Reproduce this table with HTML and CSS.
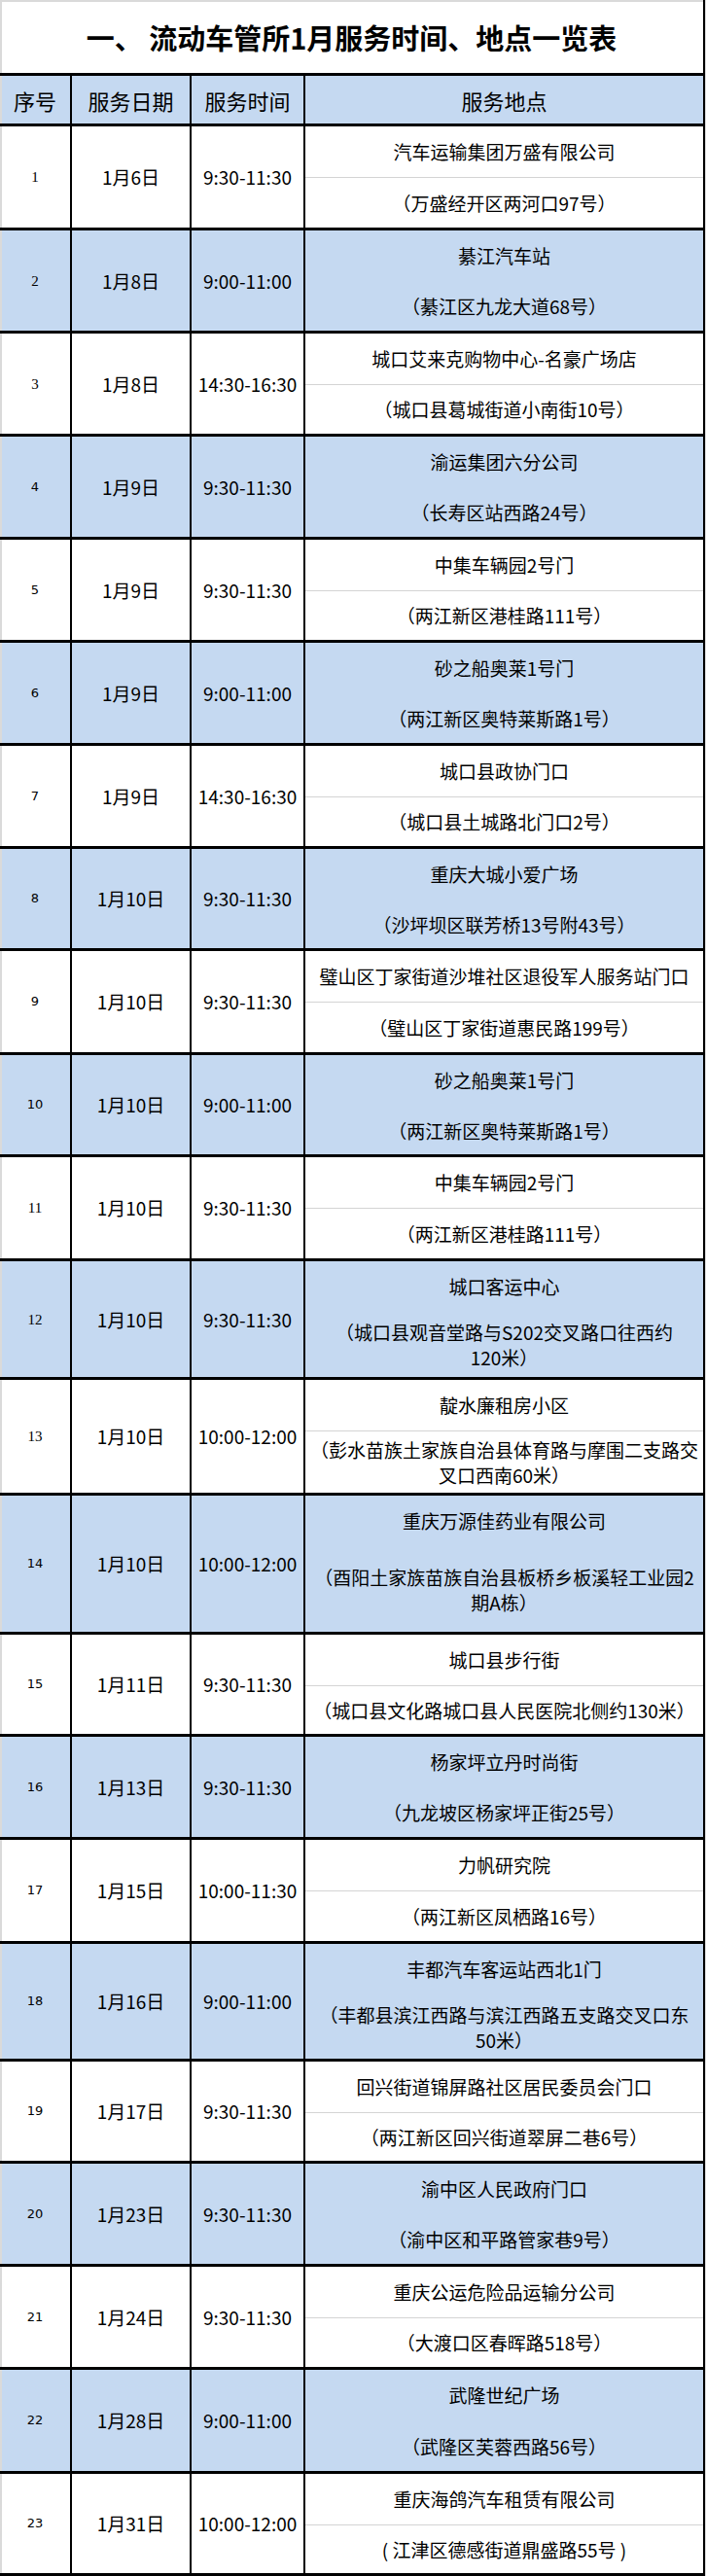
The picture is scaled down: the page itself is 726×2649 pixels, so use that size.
FILE: index.html
```html
<!DOCTYPE html>
<html lang="zh-CN">
<head>
<meta charset="utf-8">
<title>流动车管所1月服务时间、地点一览表</title>
<link rel="stylesheet" href="styles.css">
</head>
<body>
<div class="sheet">
  <div class="title-row">一、 流动车管所1月服务时间、地点一览表</div>

  <div class="row head">
    <div class="cell c-seq">序号</div>
    <div class="cell">服务日期</div>
    <div class="cell">服务时间</div>
    <div class="cell">服务地点</div>
  </div>

  <div class="row h104">
    <div class="cell c-seq serif">1</div>
    <div class="cell">1月6日</div>
    <div class="cell">9:30-11:30</div>
    <div class="loc"><div class="name">汽车运输集团万盛有限公司</div><div class="addr">（万盛经开区两河口97号）</div></div>
  </div>
  <div class="row blue h103">
    <div class="cell c-seq serif">2</div>
    <div class="cell">1月8日</div>
    <div class="cell">9:00-11:00</div>
    <div class="loc"><div class="name">綦江汽车站</div><div class="addr">（綦江区九龙大道68号）</div></div>
  </div>
  <div class="row h103">
    <div class="cell c-seq serif">3</div>
    <div class="cell">1月8日</div>
    <div class="cell">14:30-16:30</div>
    <div class="loc"><div class="name">城口艾来克购物中心-名豪广场店</div><div class="addr">（城口县葛城街道小南街10号）</div></div>
  </div>
  <div class="row blue h103">
    <div class="cell c-seq sans">4</div>
    <div class="cell">1月9日</div>
    <div class="cell">9:30-11:30</div>
    <div class="loc"><div class="name">渝运集团六分公司</div><div class="addr">（长寿区站西路24号）</div></div>
  </div>
  <div class="row h103">
    <div class="cell c-seq sans">5</div>
    <div class="cell">1月9日</div>
    <div class="cell">9:30-11:30</div>
    <div class="loc"><div class="name">中集车辆园2号门</div><div class="addr">（两江新区港桂路111号）</div></div>
  </div>
  <div class="row blue h103">
    <div class="cell c-seq sans">6</div>
    <div class="cell">1月9日</div>
    <div class="cell">9:00-11:00</div>
    <div class="loc"><div class="name">砂之船奥莱1号门</div><div class="addr">（两江新区奥特莱斯路1号）</div></div>
  </div>
  <div class="row h103">
    <div class="cell c-seq sans">7</div>
    <div class="cell">1月9日</div>
    <div class="cell">14:30-16:30</div>
    <div class="loc"><div class="name">城口县政协门口</div><div class="addr">（城口县土城路北门口2号）</div></div>
  </div>
  <div class="row blue h102">
    <div class="cell c-seq sans">8</div>
    <div class="cell">1月10日</div>
    <div class="cell">9:30-11:30</div>
    <div class="loc"><div class="name">重庆大城小爱广场</div><div class="addr">（沙坪坝区联芳桥13号附43号）</div></div>
  </div>
  <div class="row h104">
    <div class="cell c-seq sans">9</div>
    <div class="cell">1月10日</div>
    <div class="cell">9:30-11:30</div>
    <div class="loc"><div class="name">璧山区丁家街道沙堆社区退役军人服务站门口</div><div class="addr">（璧山区丁家街道惠民路199号）</div></div>
  </div>
  <div class="row blue h102">
    <div class="cell c-seq sans">10</div>
    <div class="cell">1月10日</div>
    <div class="cell">9:00-11:00</div>
    <div class="loc"><div class="name">砂之船奥莱1号门</div><div class="addr">（两江新区奥特莱斯路1号）</div></div>
  </div>
  <div class="row h104">
    <div class="cell c-seq serif">11</div>
    <div class="cell">1月10日</div>
    <div class="cell">9:30-11:30</div>
    <div class="loc"><div class="name">中集车辆园2号门</div><div class="addr">（两江新区港桂路111号）</div></div>
  </div>
  <div class="row blue h119">
    <div class="cell c-seq serif">12</div>
    <div class="cell">1月10日</div>
    <div class="cell">9:30-11:30</div>
    <div class="loc"><div class="name">城口客运中心</div><div class="addr"><span>（城口县观音堂路与S202交叉路口往西约<span class="nb">120米）</span></span></div></div>
  </div>
  <div class="row h116">
    <div class="cell c-seq serif">13</div>
    <div class="cell">1月10日</div>
    <div class="cell">10:00-12:00</div>
    <div class="loc"><div class="name">靛水廉租房小区</div><div class="addr">（彭水苗族土家族自治县体育路与摩围二支路交叉口西南60米）</div></div>
  </div>
  <div class="row blue h140">
    <div class="cell c-seq sans">14</div>
    <div class="cell">1月10日</div>
    <div class="cell">10:00-12:00</div>
    <div class="loc"><div class="name">重庆万源佳药业有限公司</div><div class="addr">（酉阳土家族苗族自治县板桥乡板溪轻工业园2期A栋）</div></div>
  </div>
  <div class="row h102">
    <div class="cell c-seq sans">15</div>
    <div class="cell">1月11日</div>
    <div class="cell">9:30-11:30</div>
    <div class="loc"><div class="name">城口县步行街</div><div class="addr">（城口县文化路城口县人民医院北侧约130米）</div></div>
  </div>
  <div class="row blue h103">
    <div class="cell c-seq sans">16</div>
    <div class="cell">1月13日</div>
    <div class="cell">9:30-11:30</div>
    <div class="loc"><div class="name">杨家坪立丹时尚街</div><div class="addr">（九龙坡区杨家坪正街25号）</div></div>
  </div>
  <div class="row h104">
    <div class="cell c-seq sans">17</div>
    <div class="cell">1月15日</div>
    <div class="cell">10:00-11:30</div>
    <div class="loc"><div class="name">力帆研究院</div><div class="addr">（两江新区凤栖路16号）</div></div>
  </div>
  <div class="row blue h118">
    <div class="cell c-seq sans">18</div>
    <div class="cell">1月16日</div>
    <div class="cell">9:00-11:00</div>
    <div class="loc"><div class="name">丰都汽车客运站西北1门</div><div class="addr"><span>（丰都县滨江西路与滨江西路五支路交叉口东<span class="nb">50米）</span></span></div></div>
  </div>
  <div class="row h102">
    <div class="cell c-seq sans">19</div>
    <div class="cell">1月17日</div>
    <div class="cell">9:30-11:30</div>
    <div class="loc"><div class="name">回兴街道锦屏路社区居民委员会门口</div><div class="addr">（两江新区回兴街道翠屏二巷6号）</div></div>
  </div>
  <div class="row blue h103">
    <div class="cell c-seq sans">20</div>
    <div class="cell">1月23日</div>
    <div class="cell">9:30-11:30</div>
    <div class="loc"><div class="name">渝中区人民政府门口</div><div class="addr">（渝中区和平路管家巷9号）</div></div>
  </div>
  <div class="row h103">
    <div class="cell c-seq sans">21</div>
    <div class="cell">1月24日</div>
    <div class="cell">9:30-11:30</div>
    <div class="loc"><div class="name">重庆公运危险品运输分公司</div><div class="addr">（大渡口区春晖路518号）</div></div>
  </div>
  <div class="row blue h104">
    <div class="cell c-seq sans">22</div>
    <div class="cell">1月28日</div>
    <div class="cell">9:00-11:00</div>
    <div class="loc"><div class="name">武隆世纪广场</div><div class="addr">（武隆区芙蓉西路56号）</div></div>
  </div>
  <div class="row h102">
    <div class="cell c-seq sans">23</div>
    <div class="cell">1月31日</div>
    <div class="cell">10:00-12:00</div>
    <div class="loc"><div class="name">重庆海鸽汽车租赁有限公司</div><div class="addr">( 江津区德感街道鼎盛路55号 )</div></div>
  </div>
</div>
</body>
</html>
```

FILE: styles.css
```css
html, body {
  margin: 0;
  padding: 0;
}
body {
  background: #dadada;
  font-family: "Noto Sans CJK SC", "Noto Sans", sans-serif;
  color: #000;
}
.sheet {
  width: 723px;
  display: flex;
  flex-direction: column;
  gap: 3px;
  background: #000;
  border-right: 2px solid #000;
  padding-bottom: 3px;
}
.title-row {
  height: 73px;
  border-top: 2px solid #dadada;
  background: #fff;
  box-shadow: inset 2px 0 0 #dadada;
  display: flex;
  align-items: center;
  justify-content: center;
  font-size: 29px;
  font-weight: 700;
  line-height: 1;
}
.row {
  display: grid;
  grid-template-columns: 72px 121px 115px 409px;
  column-gap: 2px;
  background: #000;
}
.row > div {
  background: #fff;
}
.row.blue > div,
.row.head > div {
  background: #c5d9f1;
}
.cell {
  display: flex;
  align-items: center;
  justify-content: center;
  font-size: 19px;
  line-height: 26px;
  text-align: center;
  white-space: nowrap;
}
.c-seq {
  box-shadow: inset 2px 0 0 #dadada;
}
.head {
  height: 49px;
}
.head .cell {
  font-size: 22px;
}
.serif {
  font-family: "Liberation Serif", "Times New Roman", serif;
  font-size: 15px;
}
.sans {
  font-family: "DejaVu Sans", Tahoma, sans-serif;
  font-size: 13px;
}
.loc {
  display: flex;
  flex-direction: column;
  font-size: 19px;
  line-height: 26px;
  text-align: center;
}
.loc .name {
  height: 52px;
  flex: none;
  display: flex;
  align-items: center;
  justify-content: center;
  white-space: nowrap;
}
.loc .addr {
  flex: 1;
  border-top: 1px solid #d4d4d4;
  display: flex;
  align-items: center;
  justify-content: center;
  padding: 0 1px;
}
.nb {
  white-space: nowrap;
}
.row.blue .loc .addr {
  border-top-color: #c5d9f1;
}
.h102 { height: 102px; }
.h103 { height: 103px; }
.h104 { height: 104px; }
.h116 { height: 116px; }
.h118 { height: 118px; }
.h119 { height: 119px; }
.h140 { height: 140px; }
```
